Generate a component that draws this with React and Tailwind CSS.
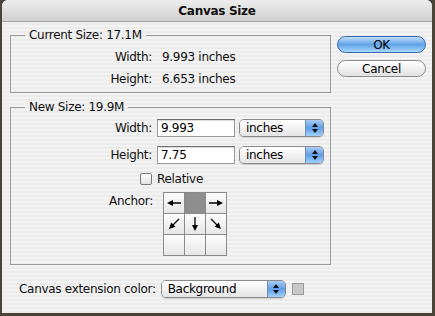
import React from "react";

const font = { fontFamily: '"DejaVu Sans", "Liberation Sans", sans-serif' };

function Arrow({ dir }) {
  const rot = { left: 180, right: 0, down: 90, dl: 135, dr: 45 }[dir];
  return (
    <svg width="20" height="20" viewBox="0 0 20 20">
      <g transform={`rotate(${rot} 10 10)`}>
        <line x1="3" y1="10" x2="13" y2="10" stroke="#000" strokeWidth="1.3" />
        <polygon points="17,10 11,7 11,13" fill="#000" />
      </g>
    </svg>
  );
}

function Cell({ children, filled }) {
  return (
    <div
      className={
        filled
          ? "w-[20px] h-[20px] bg-[#8e8e8e]"
          : "w-[20px] h-[20px] bg-gradient-to-b from-[#fdfdfd] to-[#e6e6e6] flex items-center justify-center"
      }
    >
      {children}
    </div>
  );
}

function Popup({ label, width }) {
  return (
    <div
      className="flex h-[18px] rounded-[5px] border border-[#8a8a8a] overflow-hidden shadow-[0_1px_1px_rgba(0,0,0,0.15)]"
      style={{ width }}
    >
      <div className="flex-1 flex items-center pl-[6px] text-[12px] text-black bg-gradient-to-b from-[#ffffff] via-[#f2f2f2] to-[#e4e4e4]">
        {label}
      </div>
      <div className="w-[18px] border-l border-[#6f8fb8] bg-gradient-to-b from-[#a9cdf5] via-[#5f9de8] to-[#9fd0fb] flex flex-col items-center justify-center gap-[2px]">
        <svg width="6" height="4" viewBox="0 0 6 4"><polygon points="3,0 6,4 0,4" fill="#111" /></svg>
        <svg width="6" height="4" viewBox="0 0 6 4"><polygon points="0,0 6,0 3,4" fill="#111" /></svg>
      </div>
    </div>
  );
}

function Input({ value }) {
  return (
    <div className="w-[78px] h-[18px] border border-[#9a9a9a] border-t-[#6e6e6e] bg-white flex items-center pl-[3px] text-[12px] text-black shadow-[inset_0_1px_1px_rgba(0,0,0,0.15)]">
      {value}
    </div>
  );
}

export default function App() {
  return (
    <div className="w-[435px] h-[316px] bg-[#4a4438] overflow-hidden tracking-[-0.3px]" style={font}>
      <div className="ml-[2px] w-[430px] h-[313px] rounded-t-[6px] overflow-hidden flex flex-col bg-[repeating-linear-gradient(0deg,#ebebeb_0px,#ebebeb_2px,#f3f3f3_2px,#f3f3f3_4px)]">
        <div className="h-[22px] shrink-0 flex items-center justify-center bg-gradient-to-b from-[#ededed] to-[#d0d0d0] border-b border-[#a4a4a4] text-[12px] font-bold text-[#111]">
          Canvas Size
        </div>
        <div className="flex pt-[6px]">
          <div className="flex flex-col">
            <fieldset className="ml-[8px] w-[321px] border border-[#9b9b9b] pb-[5px]">
              <legend className="ml-[14px] px-[4px] text-[12px] leading-[15px] text-[#111]">
                Current Size: 17.1M
              </legend>
              <div className="flex items-center h-[16px] mt-[6px] text-[12px] text-[#111]">
                <div className="w-[141px] text-right">Width:</div>
                <div className="ml-[10px]">9.993 inches</div>
              </div>
              <div className="flex items-center h-[16px] mt-[6px] text-[12px] text-[#111]">
                <div className="w-[141px] text-right">Height:</div>
                <div className="ml-[10px]">6.653 inches</div>
              </div>
            </fieldset>
            <fieldset className="ml-[8px] mt-[7px] w-[321px] border border-[#9b9b9b] pb-[8px]">
              <legend className="ml-[14px] px-[4px] text-[12px] leading-[15px] text-[#111]">
                New Size: 19.9M
              </legend>
              <div className="flex items-center mt-[4px] text-[12px] text-[#111]">
                <div className="w-[141px] text-right">Width:</div>
                <div className="ml-[5px]"><Input value="9.993" /></div>
                <div className="ml-[4px]"><Popup label="inches" width="85px" /></div>
              </div>
              <div className="flex items-center mt-[9px] text-[12px] text-[#111]">
                <div className="w-[141px] text-right">Height:</div>
                <div className="ml-[5px]"><Input value="7.75" /></div>
                <div className="ml-[4px]"><Popup label="inches" width="85px" /></div>
              </div>
              <div className="flex items-center mt-[7px] h-[15px] text-[12px] text-[#111]">
                <div className="w-[129px]" />
                <div className="w-[12px] h-[12px] border border-[#7a7a7a] rounded-[2px] bg-gradient-to-b from-[#ffffff] to-[#e2e2e2]" />
                <div className="ml-[5px]">Relative</div>
              </div>
              <div className="flex items-start mt-[6px] text-[12px] text-[#111]">
                <div className="w-[142px] text-right">Anchor:</div>
                <div className="ml-[10px] grid grid-cols-3 gap-[1px] bg-[#8a8a8a] border border-[#8a8a8a]">
                  <Cell><Arrow dir="left" /></Cell>
                  <Cell filled />
                  <Cell><Arrow dir="right" /></Cell>
                  <Cell><Arrow dir="dl" /></Cell>
                  <Cell><Arrow dir="down" /></Cell>
                  <Cell><Arrow dir="dr" /></Cell>
                  <Cell />
                  <Cell />
                  <Cell />
                </div>
              </div>
            </fieldset>
          </div>
          <div className="flex flex-col ml-[6px] mt-[8px] gap-[7px]">
            <div className="w-[89px] h-[17px] rounded-full border border-[#3a68ad] bg-gradient-to-b from-[#c4e0fb] via-[#5fa2e6] to-[#a8d8fb] flex items-center justify-center text-[12px] text-black">
              OK
            </div>
            <div className="w-[89px] h-[17px] rounded-full border border-[#8a8a8a] bg-gradient-to-b from-[#ffffff] via-[#f0f0f0] to-[#e2e2e2] flex items-center justify-center text-[12px] text-black">
              Cancel
            </div>
          </div>
        </div>
        <div className="flex items-center mt-[15px] ml-[17px] text-[12px] text-[#111]">
          <div>Canvas extension color:</div>
          <div className="ml-[5px]"><Popup label="Background" width="125px" /></div>
          <div className="ml-[6px] w-[12px] h-[12px] bg-[#c8c8c8] border border-[#9a9a9a]" />
        </div>
      </div>
    </div>
  );
}
